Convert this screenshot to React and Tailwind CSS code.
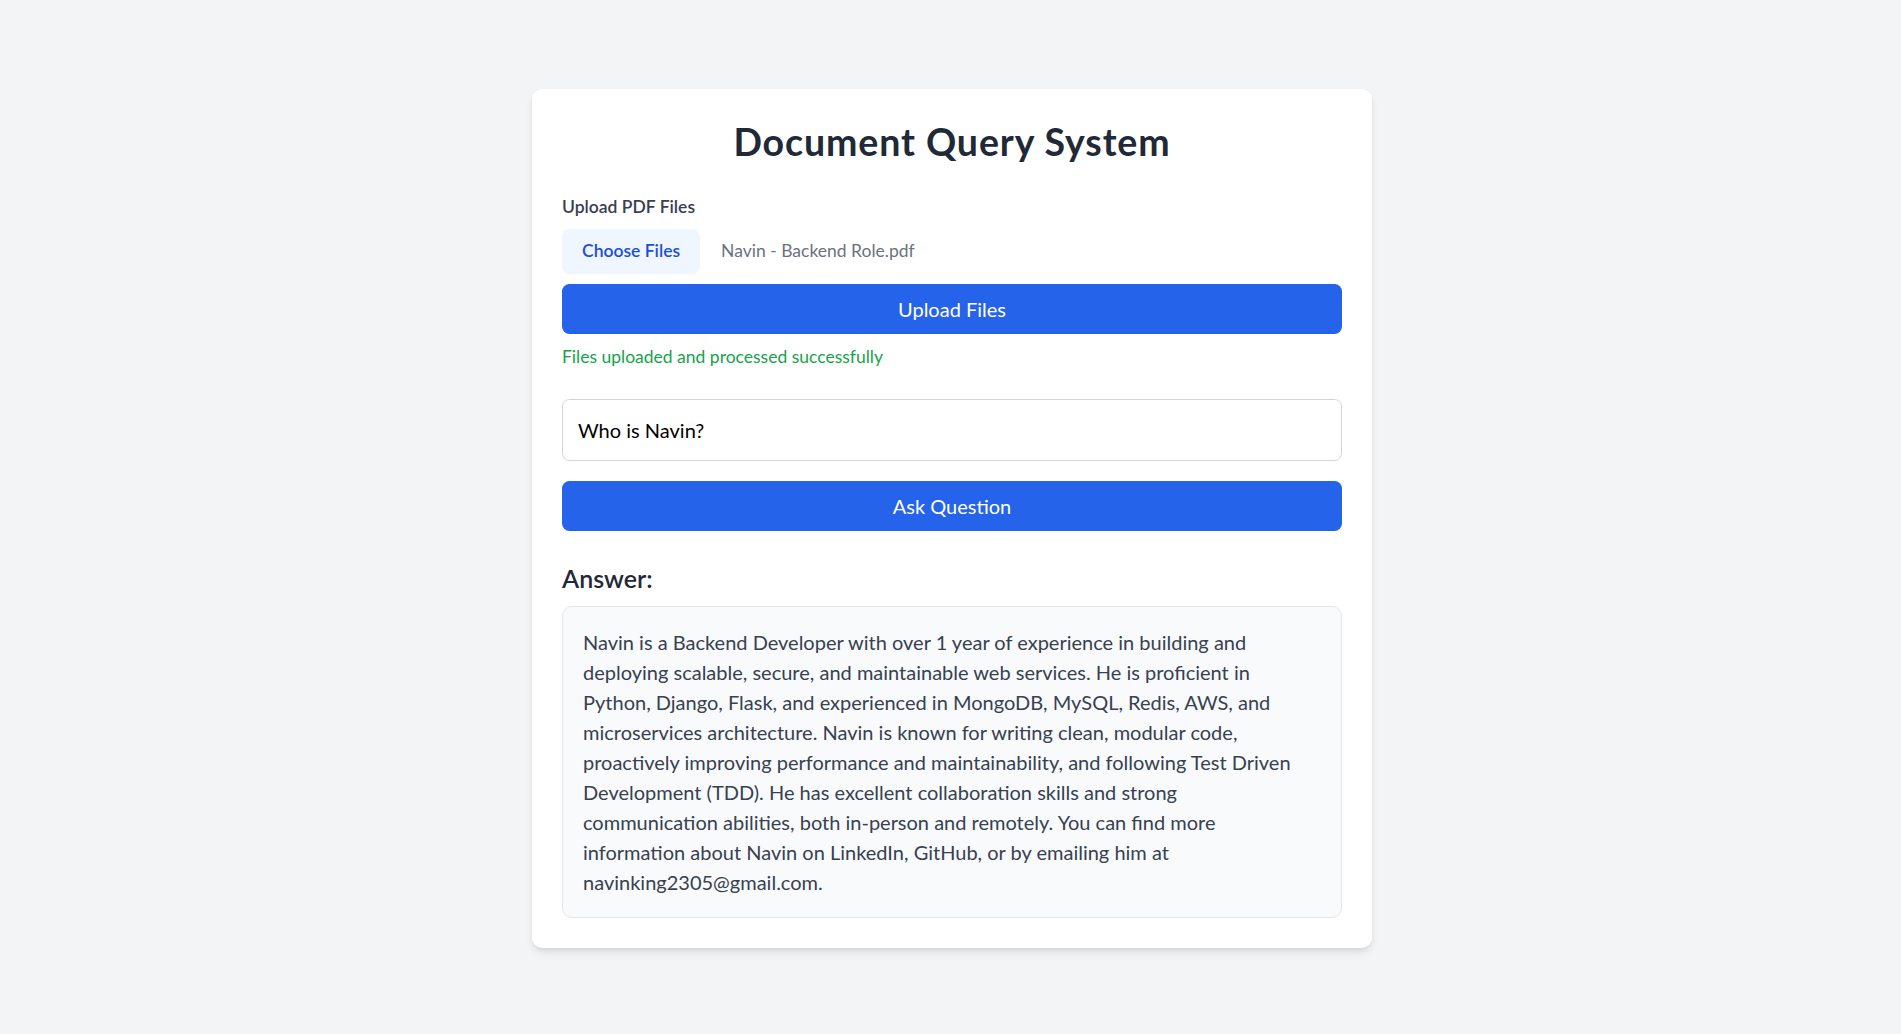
import React, { useState } from "react";

const answer =
  "Navin is a Backend Developer with over 1 year of experience in building and deploying scalable, secure, and maintainable web services. He is proficient in Python, Django, Flask, and experienced in MongoDB, MySQL, Redis, AWS, and microservices architecture. Navin is known for writing clean, modular code, proactively improving performance and maintainability, and following Test Driven Development (TDD). He has excellent collaboration skills and strong communication abilities, both in-person and remotely. You can find more information about Navin on LinkedIn, GitHub, or by emailing him at navinking2305@gmail.com.";

const App = () => {
  const [question, setQuestion] = useState("Who is Navin?");

  return (
    <div className="min-h-screen bg-[#f3f4f6] pt-[89px] pb-10 pl-[3px] font-['Lato','Noto_Sans',sans-serif]">
      <div className="w-[840px] mx-auto bg-white rounded-[10px] shadow-[0_5px_10px_-2px_rgba(0,0,0,0.12),0_2px_5px_-2px_rgba(0,0,0,0.08)] p-[30px]">
        <h1 className="text-[37.5px] leading-[45px] font-bold tracking-[0.9px] text-[#1f2937] text-center mb-[30px]">
          Document Query System
        </h1>

        <div className="mb-[30px]">
          <label className="block text-[17.5px] leading-[25px] font-semibold text-[#374151] mb-[10px]">
            Upload PDF Files
          </label>
          <div className="flex items-center mb-[10px]">
            <button className="h-[45px] px-[20px] rounded-[7.5px] bg-[#eff6ff] text-[#1d4ed8] text-[17.5px] font-semibold">
              Choose Files
            </button>
            <span className="ml-[21px] text-[17.5px] text-[#6b7280]">Navin - Backend Role.pdf</span>
          </div>
          <button className="w-full h-[50px] rounded-[7.5px] bg-[#2563eb] text-white text-[20px]">
            Upload Files
          </button>
          <p className="mt-[10px] text-[17.5px] leading-[25px] text-[#16a34a]">
            Files uploaded and processed successfully
          </p>
        </div>

        <input
          value={question}
          onChange={(e) => setQuestion(e.target.value)}
          className="w-full h-[62px] px-[15px] border border-[#d1d5db] rounded-[7.5px] text-[20px] text-black outline-none mb-[20px]"
        />
        <button className="w-full h-[50px] rounded-[7.5px] bg-[#2563eb] text-white text-[20px]">
          Ask Question
        </button>

        <div className="mt-[30px]">
          <h2 className="text-[25px] leading-[35px] font-semibold text-[#1f2937] mb-[10px]">Answer:</h2>
          <div className="bg-[#f9fafb] border border-[#e5e7eb] rounded-[10px] pl-[20px] pr-[28px] py-[20px] text-[20px] leading-[30px] text-[#374151]">
            {answer}
          </div>
        </div>
      </div>
    </div>
  );
};

export default App;
